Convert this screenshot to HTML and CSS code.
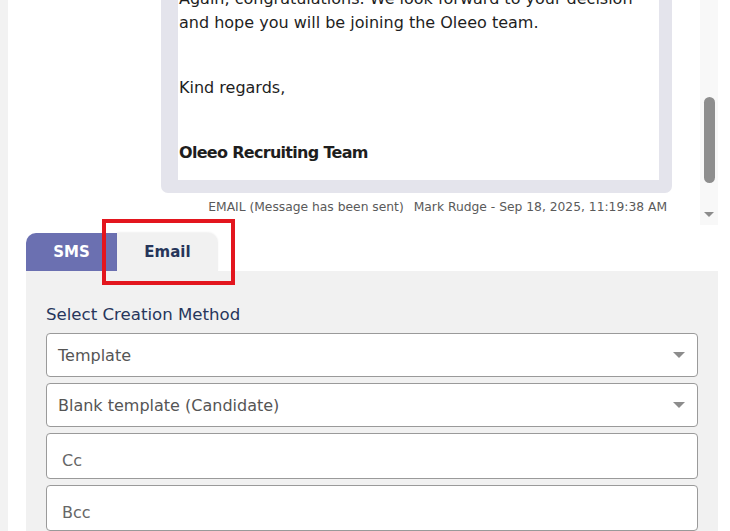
FILE: index.html
```html
<!DOCTYPE html>
<html lang="en">
<head>
<meta charset="utf-8">
<title>Messages</title>
<link rel="stylesheet" href="styles.css">
</head>
<body>
<div class="page">
  <div class="gutter"></div>
  <div class="main">
    <div class="thread">
      <div class="thread-scroll">
        <div class="messages">
          <div class="bubble">
            <div class="bubble-body">
              <p>Again, congratulations. We look forward to your decision<br>and hope you will be joining the Oleeo team.</p>
              <p>Kind regards,</p>
              <p class="sig">Oleeo Recruiting Team</p>
            </div>
          </div>
          <div class="meta">
            <span>EMAIL (Message has been sent)</span>
            <span>Mark Rudge - Sep 18, 2025, 11:19:38 AM</span>
          </div>
        </div>
      </div>
      <div class="scrollbar">
        <div class="thumb"></div>
        <div class="arrow-down"></div>
      </div>
    </div>

    <div class="composer">
      <div class="tabs">
        <div class="tab tab-sms">SMS</div>
        <div class="tab tab-email">Email</div>
        <div class="highlight"></div>
      </div>
      <div class="panel">
        <div class="label">Select Creation Method</div>
        <div class="fields">
          <div class="select"><span>Template</span><i class="caret"></i></div>
          <div class="select"><span>Blank template (Candidate)</span><i class="caret"></i></div>
          <div class="input"><span>Cc</span></div>
          <div class="input"><span>Bcc</span></div>
        </div>
      </div>
    </div>
  </div>
</div>
</body>
</html>
```
FILE: styles.css
```css
* { box-sizing: border-box; }
html, body { margin: 0; padding: 0; }
body {
  width: 730px;
  height: 531px;
  overflow: hidden;
  background: #ffffff;
  font-family: "DejaVu Sans", "Liberation Sans", sans-serif;
  color: #1e1e1e;
}
.page {
  display: flex;
  height: 531px;
}
.gutter {
  width: 8px;
  background: #f2f2f2;
  flex: none;
}
.main {
  flex: 1;
  display: flex;
  flex-direction: column;
  padding-right: 12px;
}

/* thread */
.thread {
  height: 225px;
  display: flex;
  flex: none;
}
.thread-scroll {
  flex: 1;
  overflow: hidden;
}
.messages {
  margin-top: -42px;
  padding-left: 153px;
  padding-right: 28px;
}
.bubble {
  background: #e4e4ec;
  border-radius: 7px;
  padding: 13px 13px 13px 17px;
}
.bubble-body {
  background: #ffffff;
  padding: 16px 10px 15px 1px;
  font-size: 16px;
  line-height: 24px;
}
.bubble-body p { margin: 0; }
.bubble-body p + p { margin-top: 41px; }
.bubble-body .sig {
  font-weight: bold;
  letter-spacing: -0.7px;
}
.meta {
  display: flex;
  justify-content: flex-end;
  gap: 10px;
  margin-top: 6px;
  padding-right: 5px;
  font-size: 12.3px;
  line-height: 16px;
  color: #5a5a5a;
}
.scrollbar {
  width: 18px;
  flex: none;
  background: #f8f8f8;
}
.thumb {
  margin: 97px 3px 0 4px;
  height: 86px;
  border-radius: 6px;
  background: #8e8e8e;
}
.arrow-down {
  margin: 29px auto 0;
  width: 0;
  height: 0;
  border-left: 5px solid transparent;
  border-right: 5px solid transparent;
  border-top: 5px solid #8c8c8c;
}

/* composer */
.composer {
  margin-top: 8px;
  padding-left: 18px;
  flex: 1;
  display: flex;
  flex-direction: column;
}
.tabs {
  display: flex;
  height: 38px;
  position: relative;
}
.tab {
  display: flex;
  align-items: center;
  justify-content: center;
  font-weight: bold;
  font-size: 15px;
}
.tab-sms {
  width: 91px;
  background: #6b70b1;
  color: #ffffff;
  border-top-left-radius: 10px;
}
.tab-email {
  width: 101px;
  background: #f1f1f1;
  color: #26355a;
  border-top-right-radius: 10px;
  box-shadow: 0 -1px 2px rgba(0,0,0,0.06);
}
.highlight {
  position: absolute;
  left: 76px;
  top: -14px;
  width: 133px;
  height: 66px;
  border: 4px solid #e3161e;
}
.panel {
  flex: 1;
  background: #f1f1f1;
  padding: 34px 20px 0 20px;
}
.label {
  font-size: 16.6px;
  line-height: 20px;
  color: #27365c;
  margin-bottom: 8px;
}
.fields {
  display: flex;
  flex-direction: column;
  gap: 6px;
}
.select, .input {
  background: #ffffff;
  border: 1px solid #9a9a9a;
  border-radius: 4px;
  display: flex;
  align-items: center;
  font-size: 16px;
  color: #555555;
}
.select {
  height: 44px;
  padding: 0 12px 0 11px;
  justify-content: space-between;
}
.input {
  height: 46px;
  padding: 8px 15px 0;
  color: #666666;
}
.caret {
  width: 0;
  height: 0;
  border-left: 6px solid transparent;
  border-right: 6px solid transparent;
  border-top: 6px solid #8c8c8c;
}
```
